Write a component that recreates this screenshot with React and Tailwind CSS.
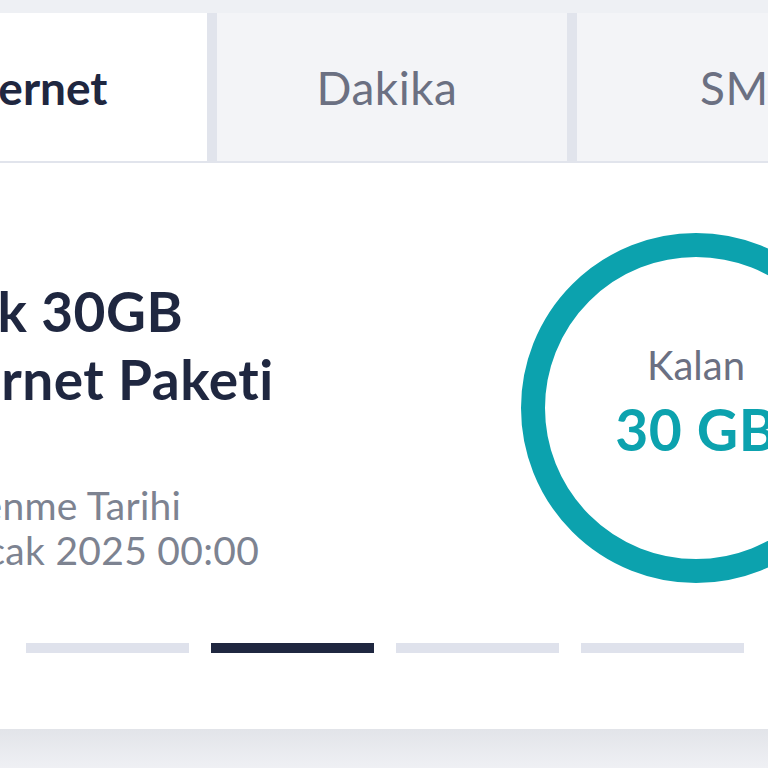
const tabs = [
  { label: "İnternet", active: true },
  { label: "Dakika", active: false },
  { label: "SMS", active: false },
];

const bars = [false, true, false, false];

const UsageRing = () => {
  return (
    <div className="grid w-[350px] h-[350px] mt-[70px] shrink-0">
      <svg width="350" height="350" viewBox="0 0 350 350" className="[grid-area:1/1]">
        <circle cx="175" cy="175" r="163" fill="none" stroke="#0ca2ae" strokeWidth="24" />
      </svg>
      <div className="[grid-area:1/1] flex flex-col items-center pt-[110px]">
        <span className="text-[40px] leading-[44px] text-[#6b7082]">Kalan</span>
        <span className="mt-[10px] text-[57px] leading-[64px] font-bold tracking-[0.5px] text-[#0ca2ae]">30 GB</span>
      </div>
    </div>
  );
};

const App = () => {
  return (
    <div
      className="w-[768px] h-[768px] overflow-hidden bg-[#eef0f4]"
      style={{ fontFamily: "Lato, 'Noto Sans', sans-serif" }}
    >
      <div className="ml-[-143px] w-[1100px] pt-[13px]">
        <div className="flex gap-[10px] h-[150px] bg-[#e1e4ec] border-b-2 border-[#e1e4ec]">
          {tabs.map((t) => (
            <div
              key={t.label}
              className={
                t.active
                  ? "w-[350px] shrink-0 flex items-center justify-center pr-[14px] bg-white text-[46px] font-bold text-[#1f2740]"
                  : "w-[350px] shrink-0 flex items-center justify-center pr-[10px] bg-[#f3f4f7] text-[46px] tracking-[0.5px] text-[#6b7082]"
              }
            >
              {t.label}
            </div>
          ))}
        </div>

        <div className="bg-white h-[566px] flex flex-col">
          <div className="flex">
            <div className="w-[664px] shrink-0 pl-[46px] pt-[114px]">
              <h2 className="text-[55px] leading-[68px] font-bold tracking-[0.5px] text-[#1f2740]">
                Aylık 30GB
                <br />
                İnternet Paketi
              </h2>
              <p className="mt-[70px] ml-[-4px] text-[39px] leading-[45px] tracking-[0.3px] text-[#7d8391]">
                Yenilenme Tarihi
                <br />
                31 Ocak 2025 00:00
              </p>
            </div>
            <UsageRing />
          </div>
          <div className="flex gap-[22px] pl-[169px] mt-[60px]">
            {bars.map((on, i) => (
              <div
                key={i}
                className={on ? "w-[163px] h-[10px] bg-[#1f2740]" : "w-[163px] h-[10px] bg-[#dfe2ec]"}
              />
            ))}
          </div>
        </div>

        <div className="h-[39px] bg-linear-to-b from-[#e2e4e9] to-[#eff0f4]" />
      </div>
    </div>
  );
};

export default App;
